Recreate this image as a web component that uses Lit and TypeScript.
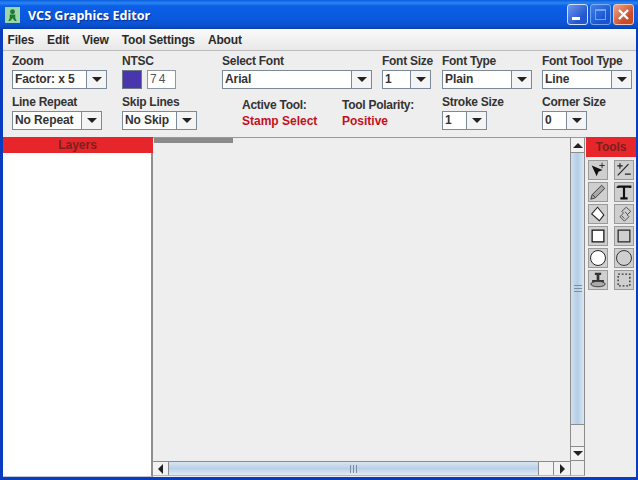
import { LitElement, html, css, svg } from "lit";
import { customElement } from "lit/decorators.js";

const combo = (text: string, width: number) => html`
  <div class="combo" style="width:${width}px">
    <span class="combo-text">${text}</span>
    <span class="combo-btn"><i class="down"></i></span>
  </div>`;

const field = (label: string, text: string, width: number) => html`
  <div class="field"><label>${label}</label>${combo(text, width)}</div>`;

const toolIcons = [
  svg`<path d="M3 5l12 5-4.500 2L8.500 17z" fill="#111"/><path d="M14.500 2v6M11.500 5h6" stroke="#222" fill="none"/>`,
  svg`<path d="M5.500 2.500v6M2.500 5.500h6M3 16L15 3.500M11 14.500h6.500" stroke="#222" fill="none" stroke-width="1.300"/>`,
  svg`<path d="M2 18l1.500-5L14 2.500l3.500 3.500L7 16.500z" fill="#aaa" stroke="#333"/><path d="M4 13l3 3" stroke="#333"/>`,
  svg`<path d="M3 4h14v1.500M3 5.500V4M10 4v12.500M6 17h8" stroke="#111" stroke-width="2.400" fill="none"/>`,
  svg`<path d="M9.500 2.500l7 8.500-5 6.500L3 10z" fill="#fff" stroke="#222" stroke-width="1.200"/>`,
  svg`<path d="M12.500 2.500l5 4.500-4 4 2 2-5 5-5-5 4-4-2-2z M7.500 12l3 3M11 7.500l3 3" fill="none" stroke="#444"/>`,
  svg`<rect x="3.500" y="3.500" width="13" height="13" fill="#fff" stroke="#222" stroke-width="1.500"/>`,
  svg`<rect x="3.500" y="3.500" width="13" height="13" fill="none" stroke="#333" stroke-width="1.500"/>`,
  svg`<circle cx="10" cy="10" r="8.300" fill="#fff" stroke="#222" stroke-width="1.100"/>`,
  svg`<circle cx="10" cy="10" r="8.300" fill="none" stroke="#333" stroke-width="1.100"/>`,
  svg`<path d="M6.500 2h7v2.500H11.500V10h5v3H3.500v-3h5V4.500H6.500z" fill="#333"/><ellipse cx="10" cy="14.500" rx="8" ry="3" fill="#aaa" stroke="#333"/>`,
  svg`<rect x="3.500" y="3.500" width="13" height="13" fill="none" stroke="#333" stroke-width="1.500" stroke-dasharray="2 2"/>`,
];

@customElement("app-root")
export class AppRoot extends LitElement {
  static styles = css`
    :host {
      display: flex;
      flex-direction: column;
      width: 638px;
      height: 480px;
      overflow: hidden;
      background: #0a3cc0;
      font-family: "Liberation Sans", Arial, sans-serif;
      color: #333;
    }
    .title {
      height: 29px;
      flex: none;
      display: flex;
      align-items: center;
      padding: 0 4px 0 5px;
      background: linear-gradient(#0a5ce0 0, #2a86f0 3px, #0b5fe6 6px, #0a58dc 20px, #0a4fcc 26px, #083fae 29px);
    }
    .app-icon { width: 15px; height: 16px; margin-right: 8px; display: block; }
    .title-text {
      flex: 1;
      color: #fff;
      font: bold 12.6px "Noto Sans", sans-serif;
      text-shadow: 1px 1px 1px #0a2f90;
      padding-top: 1px;
    }
    .wbtns { display: flex; gap: 2px; }
    .wbtn {
      width: 21px;
      height: 21px;
      box-sizing: border-box;
      border: 1px solid #cfe0fb;
      border-radius: 3px;
      background: linear-gradient(135deg, #6f97ee, #2456cf 70%);
      display: block;
    }
    .wbtn.dis { opacity: 0.55; }
    .wbtn.close { background: linear-gradient(135deg, #eda58c, #cc4a26 70%); border-color: #eec7b8; }
    .frame {
      flex: 1;
      min-height: 0;
      display: flex;
      flex-direction: column;
      margin: 0 2px 3px 3px;
      background: #eeeeee;
    }
    .menu {
      height: 22px;
      box-sizing: border-box;
      flex: none;
      display: flex;
      align-items: center;
      padding: 0 0 0 4.5px;
      gap: 13px;
      font-size: 12px;
      letter-spacing: -0.15px;
      font-weight: bold;
      color: #2a2a2a;
      background: linear-gradient(#fafafa, #e8e8e8);
      border-bottom: 1px solid #bbb;
    }
    .toolbar {
      height: 86px;
      flex: none;
      box-sizing: border-box;
      padding: 3px 0 0 9px;
      display: grid;
      grid-template-columns: 110px 100px 160px 60px 100px 1fr;
      grid-template-rows: 41px 38px;
    }
    .field { display: flex; flex-direction: column; gap: 2px; }
    label {
      font-size: 12px;
      letter-spacing: -0.27px;
      font-weight: bold;
      color: #333;
      line-height: 14px;
      white-space: nowrap;
      display: block;
      height: 14px;
    }
    .combo {
      height: 19px;
      box-sizing: border-box;
      display: flex;
      border: 1px solid #7a8a99;
      background: #fff;
    }
    .combo-text {
      flex: 1;
      font-size: 12px;
      letter-spacing: -0.1px;
      font-weight: bold;
      color: #333;
      line-height: 17px;
      padding-left: 2px;
      white-space: nowrap;
      overflow: hidden;
    }
    .combo-btn {
      width: 19px;
      flex: none;
      border-left: 1px solid #7a8a99;
      display: flex;
      align-items: center;
      justify-content: center;
      background: #f4f4f4;
    }
    .down, .up, .left, .right { display: block; width: 0; height: 0; border-style: solid; border-color: transparent; }
    .down { border-width: 5px 5px 0 5px; border-top-color: #222; }
    .up { border-width: 0 5px 5px 5px; border-bottom-color: #222; }
    .left { border-width: 5px 5px 5px 0; border-right-color: #222; }
    .right { border-width: 5px 0 5px 5px; border-left-color: #222; }
    .ntsc { display: flex; gap: 5px; align-items: center; }
    .swatch {
      width: 20px;
      height: 19px;
      box-sizing: border-box;
      background: #4a36ac;
      border: 1px solid #6a7a88;
    }
    .num {
      width: 29px;
      height: 19px;
      box-sizing: border-box;
      border: 1px solid #8a98a4;
      background: #fff;
      font-size: 12px;
      color: #555;
      padding-left: 2px;
      line-height: 17px;
      letter-spacing: 2px;
    }
    .statuspair { display: flex; grid-column: 3 / span 2; padding: 3px 0 0 20px; }
    .status { display: flex; flex-direction: column; gap: 2px; }
    .status.first { width: 100px; flex: none; }
    .value { font-size: 12px; font-weight: bold; color: #c4101c; line-height: 14px; white-space: nowrap; }
    .main { flex: 1; min-height: 0; display: flex; }
    .layers {
      width: 150px;
      flex: none;
      display: flex;
      flex-direction: column;
    }
    .red-h {
      background: #e6262a;
      color: #7a2020;
      font-size: 12px;
      font-weight: bold;
      text-align: center;
      flex: none;
    }
    .layers .red-h { height: 16px; line-height: 16px; padding-right: 1px; }
    .list { flex: 1; background: #fff; border-right: 2px solid #8e8e8e; border-bottom: 1px solid #c0c8d4; }
    .pane {
      width: 433px;
      flex: none;
      display: grid;
      grid-template-columns: 1fr 15px;
      grid-template-rows: 1fr 15px;
      padding: 0 1px 1px 0;
      box-sizing: border-box;
      border-top: 1px solid #999;
    }
    .canvas { background: #eeeeee; min-width: 0; }
    .strip { width: 79px; height: 5px; margin-left: 1px; background: #8a8a8a; }
    .vbar {
      display: flex;
      flex-direction: column;
      border-left: 1px solid #8c8c8c;
      border-right: 1px solid #8c8c8c;
    }
    .sbtn {
      flex: none;
      display: flex;
      align-items: center;
      justify-content: center;
      background: #f2f2f2;
    }
    .vbar .sbtn { height: 15px; box-sizing: border-box; }
    .vthumb {
      height: 272px;
      flex: none;
      background: linear-gradient(90deg, #d0e0f0, #b4cde6 50%, #dbe7f3);
      display: flex;
      align-items: center;
      justify-content: center;
      border-bottom: 1px solid #8c8c8c;
      box-sizing: border-box;
    }
    .vtrack { flex: 1; min-height: 0; }
    .vbar .up-btn { border-bottom: 1px solid #8c8c8c; }
    .vbar .down-btn { border-top: 1px solid #8c8c8c; border-bottom: 1px solid #8c8c8c; }
    .hgrip { width: 8px; height: 7px; background: repeating-linear-gradient(#7f8c99 0 1px, transparent 1px 3px); }
    .vgrip { width: 7px; height: 8px; background: repeating-linear-gradient(90deg, #7f8c99 0 1px, transparent 1px 3px); }
    .hbar {
      display: flex;
      border-top: 1px solid #8c8c8c;
      border-bottom: 1px solid #b0b8c4;
    }
    .hbar .sbtn { width: 15px; }
    .hthumb {
      flex: 1;
      background: linear-gradient(#d8e4f0, #bad0e8 50%, #e2ebf5);
      display: flex;
      align-items: center;
      justify-content: center;
      border-left: 1px solid #8c8c8c;
      border-right: 1px solid #8c8c8c;
    }
    .htrack { width: 14px; flex: none; border-right: 1px solid #8c8c8c; background: #f2f2f2; }
    .hbar .right-btn { width: 16px; }
    .corner {
      background: #eeeeee;
      border-left: 1px solid #8c8c8c;
      border-right: 1px solid #8c8c8c;
      border-bottom: 1px solid #b0b8c4;
    }
    .tools { flex: 1; min-width: 0; display: flex; flex-direction: column; }
    .tools .red-h { height: 20px; line-height: 20px; }
    .tool-grid {
      padding: 3px 0 0 2px;
      display: grid;
      grid-template-columns: 20px 20px;
      grid-auto-rows: 20px;
      column-gap: 6px;
      row-gap: 2px;
    }
    .tool {
      box-sizing: border-box;
      background: #cfcfcf;
      border: 1px solid #9a9a9a;
      display: flex;
      align-items: center;
      justify-content: center;
    }
    .tool svg { width: 18px; height: 18px; display: block; }
  `;

  render() {
    return html`
      <div class="title">
        <svg class="app-icon" viewBox="0 0 16 17">
          <rect width="16" height="17" fill="#9ed8a8"/>
          <circle cx="8" cy="5" r="2.6" fill="#1e7a34"/>
          <path d="M5 8h6v4l1.500 3h-2L8 12l-2.500 3h-2L5 12z" fill="#1e7a34"/>
        </svg>
        <span class="title-text">VCS Graphics Editor</span>
        <div class="wbtns">
          <span class="wbtn">
            <svg width="19" height="19"><rect x="4" y="12" width="8" height="3" fill="#fff"/></svg>
          </span>
          <span class="wbtn dis">
            <svg width="19" height="19"><rect x="4.500" y="4.500" width="10" height="10" fill="none" stroke="#cfe0fb"/><rect x="4" y="4" width="11" height="2" fill="#cfe0fb"/></svg>
          </span>
          <span class="wbtn close">
            <svg width="19" height="19"><path d="M5 5l9 9M14 5l-9 9" stroke="#fff" stroke-width="2.400"/></svg>
          </span>
        </div>
      </div>
      <div class="frame">
        <div class="menu">
          <span>Files</span><span>Edit</span><span>View</span><span>Tool Settings</span><span>About</span>
        </div>
        <div class="toolbar">
          ${field("Zoom", "Factor: x 5", 95)}
          <div class="field">
            <label>NTSC</label>
            <div class="ntsc"><div class="swatch"></div><div class="num">74</div></div>
          </div>
          ${field("Select Font", "Arial", 150)}
          ${field("Font Size", "1", 49)}
          ${field("Font Type", "Plain", 90)}
          ${field("Font Tool Type", "Line", 90)}
          ${field("Line Repeat", "No Repeat", 90)}
          ${field("Skip Lines", "No Skip", 75)}
          <div class="statuspair">
            <div class="status first"><label>Active Tool:</label><div class="value">Stamp Select</div></div>
            <div class="status"><label>Tool Polarity:</label><div class="value">Positive</div></div>
          </div>
          ${field("Stroke Size", "1", 45)}
          ${field("Corner Size", "0", 45)}
        </div>
        <div class="main">
          <div class="layers">
            <div class="red-h">Layers</div>
            <div class="list"></div>
          </div>
          <div class="pane">
            <div class="canvas"><div class="strip"></div></div>
            <div class="vbar">
              <div class="sbtn up-btn"><i class="up"></i></div>
              <div class="vthumb"><div class="hgrip"></div></div>
              <div class="vtrack"></div>
              <div class="sbtn down-btn"><i class="down"></i></div>
            </div>
            <div class="hbar">
              <div class="sbtn"><i class="left"></i></div>
              <div class="hthumb"><div class="vgrip"></div></div>
              <div class="htrack"></div>
              <div class="sbtn right-btn"><i class="right"></i></div>
            </div>
            <div class="corner"></div>
          </div>
          <div class="tools">
            <div class="red-h">Tools</div>
            <div class="tool-grid">
              ${toolIcons.map((i) => html`<div class="tool"><svg viewBox="0 0 20 20">${i}</svg></div>`)}
            </div>
          </div>
        </div>
      </div>
    `;
  }
}
